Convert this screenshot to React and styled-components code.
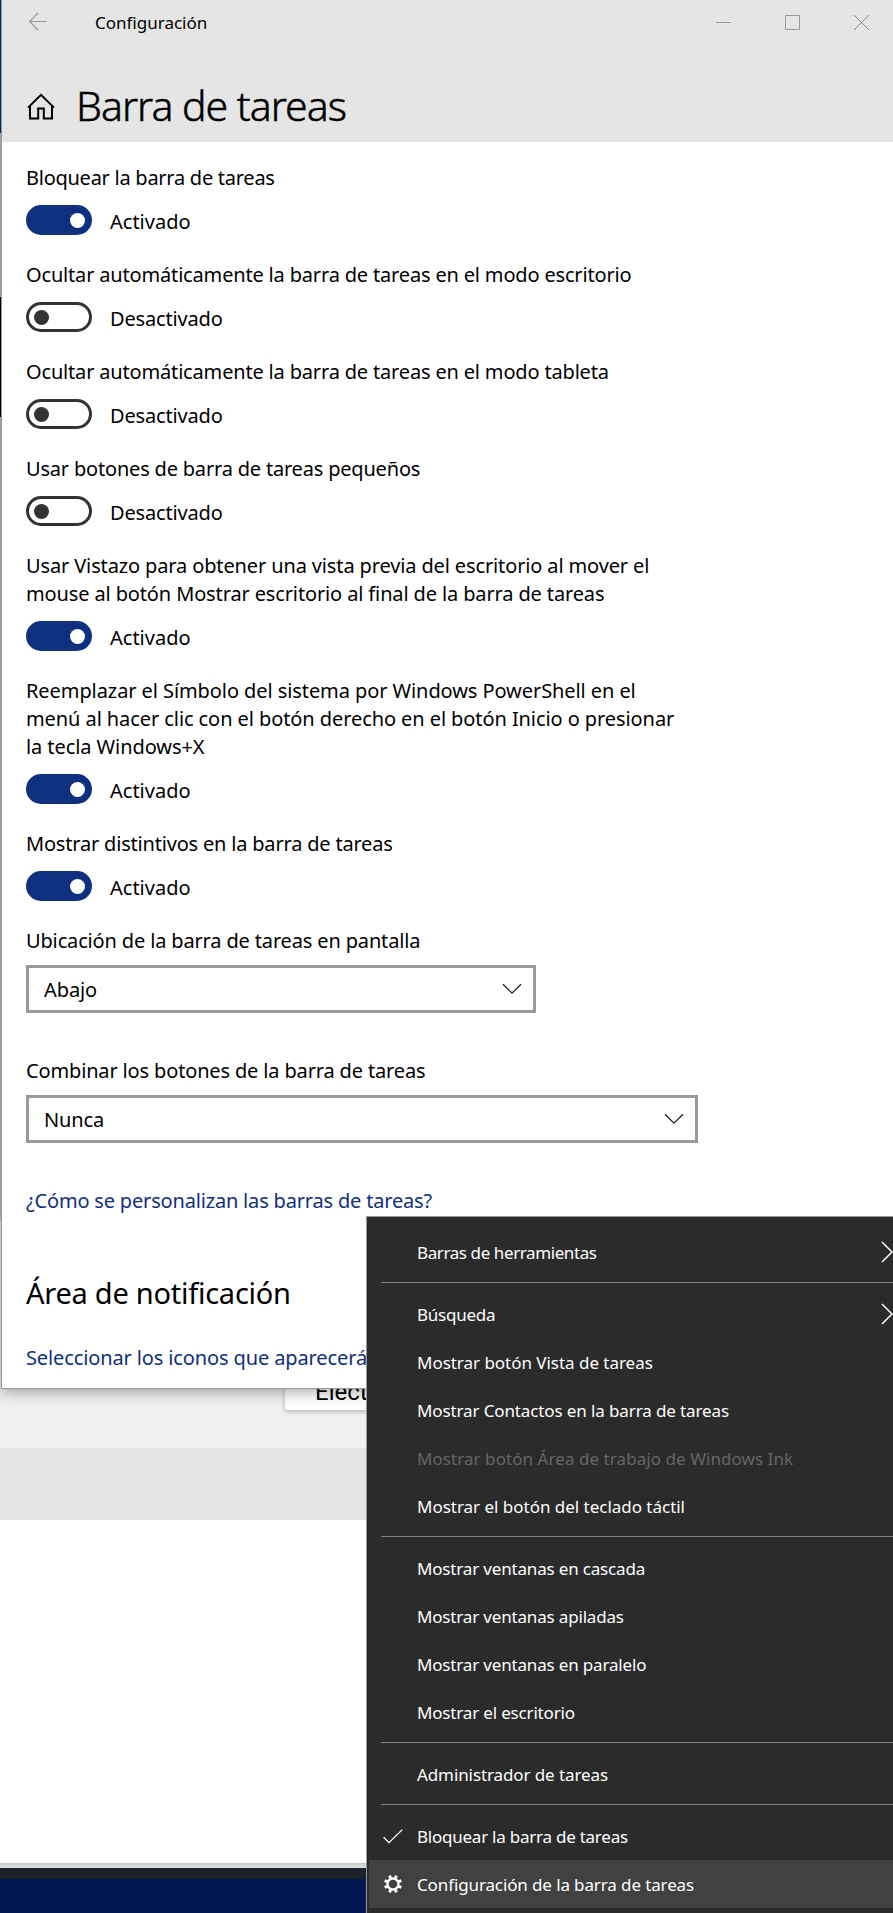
import React, { useState } from 'react';
import styled, { createGlobalStyle } from 'styled-components';

const initialToggles = [
  { id: 'lock', label: 'Bloquear la barra de tareas', on: true, tracking: -0.26 },
  {
    id: 'hide-desktop',
    label: 'Ocultar automáticamente la barra de tareas en el modo escritorio',
    on: false,
    tracking: -0.17,
  },
  {
    id: 'hide-tablet',
    label: 'Ocultar automáticamente la barra de tareas en el modo tableta',
    on: false,
    tracking: -0.17,
  },
  { id: 'small', label: 'Usar botones de barra de tareas pequeños', on: false, tracking: -0.19 },
  {
    id: 'peek',
    label:
      'Usar Vistazo para obtener una vista previa del escritorio al mover el mouse al botón Mostrar escritorio al final de la barra de tareas',
    on: true,
    tracking: -0.13,
  },
  {
    id: 'powershell',
    label:
      'Reemplazar el Símbolo del sistema por Windows PowerShell en el menú al hacer clic con el botón derecho en el botón Inicio o presionar la tecla Windows+X',
    on: true,
    tracking: -0.08,
  },
  { id: 'badges', label: 'Mostrar distintivos en la barra de tareas', on: true, tracking: -0.19 },
];

const menuGroups = [
  [{ label: 'Barras de herramientas', submenu: true, tracking: -0.4 }],
  [
    { label: 'Búsqueda', submenu: true, tracking: -0.25 },
    { label: 'Mostrar botón Vista de tareas', tracking: -0.03 },
    { label: 'Mostrar Contactos en la barra de tareas' },
    { label: 'Mostrar botón Área de trabajo de Windows Ink', disabled: true, tracking: 0.06 },
    { label: 'Mostrar el botón del teclado táctil', tracking: -0.02 },
  ],
  [
    { label: 'Mostrar ventanas en cascada', tracking: -0.17 },
    { label: 'Mostrar ventanas apiladas', tracking: -0.17 },
    { label: 'Mostrar ventanas en paralelo', tracking: -0.17 },
    { label: 'Mostrar el escritorio', tracking: -0.17 },
  ],
  [{ label: 'Administrador de tareas', tracking: -0.1 }],
  [
    { label: 'Bloquear la barra de tareas', icon: 'check', tracking: -0.24 },
    { label: 'Configuración de la barra de tareas', icon: 'gear', active: true },
  ],
];

const BackIcon = () => (
  <svg width="20" height="19" viewBox="0 0 20 19" fill="none" stroke="#999" strokeWidth="1.2">
    <path d="M19 9.5H1.5M10 1 1.5 9.5 10 18" />
  </svg>
);

const HomeIcon = () => (
  <svg width="28" height="27" viewBox="0 0 28 27" fill="none" stroke="#000" strokeWidth="2">
    <path d="M1 14.6 14 1.8l13 12.8M3 12.8V25.4h8.2v-10h5.6v10H25V12.8" />
  </svg>
);

const ChevronDown = () => (
  <svg width="20" height="12" viewBox="0 0 20 12" fill="none" stroke="#222" strokeWidth="1.3">
    <path d="M1 1.2 10 10.2 19 1.2" />
  </svg>
);

const ChevronRight = () => (
  <svg width="12" height="22" viewBox="0 0 12 22" fill="none" stroke="#fff" strokeWidth="1.5">
    <path d="M1 1 11 11 1 21" />
  </svg>
);

const CheckIcon = () => (
  <svg width="20" height="15" viewBox="0 0 20 15" fill="none" stroke="#fff" strokeWidth="1.3">
    <path d="M0.6 8.2 6 13.6 19.3 0.6" />
  </svg>
);

const GearIcon = () => (
  <svg width="18" height="18" viewBox="-9 -9 18 18" fill="none" stroke="#fff">
    <circle r="5.5" strokeWidth="2.3" />
    {[22.5, 67.5, 112.5, 157.5, 202.5, 247.5, 292.5, 337.5].map((a) => (
      <path key={a} d="M0 -6V-9" strokeWidth="3" transform={`rotate(${a})`} />
    ))}
  </svg>
);

const menuIcons = { check: <CheckIcon />, gear: <GearIcon /> };

const App = () => {
  const [toggles, setToggles] = useState(initialToggles);

  const flip = (id) => {
    setToggles(toggles.map((t) => (t.id === id ? { ...t, on: !t.on } : t)));
  };

  return (
    <Screen>
      <GlobalStyle />

      <Backdrop>
        <EdgeNavy />
        <EdgeGray $height={164} />
        <EdgeBlack />
        <EdgeGray $height={804} />
        <PageBand>
          <Card>Elect</Card>
        </PageBand>
        <FooterBand />
        <BlankBand />
        <BrowserEdge />
        <Wallpaper />
        <Taskbar />
      </Backdrop>

      <Window>
        <Header>
          <TitleBar>
            <BackButton>
              <BackIcon />
            </BackButton>
            <WindowTitle>Configuración</WindowTitle>
            <WindowButton aria-label="Minimizar">
              <svg width="15" height="15" stroke="#999">
                <path d="M0 7.5H15" />
              </svg>
            </WindowButton>
            <WindowButton aria-label="Maximizar">
              <svg width="15" height="15" stroke="#999" fill="none">
                <path d="M.5 .5h14v14H.5z" />
              </svg>
            </WindowButton>
            <WindowButton aria-label="Cerrar">
              <svg width="15" height="15" stroke="#888">
                <path d="M0 0 15 15M15 0 0 15" />
              </svg>
            </WindowButton>
          </TitleBar>
          <HeadingRow>
            <HomeIcon />
            <Heading>Barra de tareas</Heading>
          </HeadingRow>
        </Header>

        <Content>
          {toggles.map((t) => (
            <Setting key={t.id}>
              <Label $tracking={t.tracking}>{t.label}</Label>
              <ToggleRow>
                <Switch $on={t.on} role="switch" aria-checked={t.on} onClick={() => flip(t.id)}>
                  <Knob $on={t.on} />
                </Switch>
                <State $on={t.on}>{t.on ? 'Activado' : 'Desactivado'}</State>
              </ToggleRow>
            </Setting>
          ))}

          <Field>
            <Label $tracking={-0.15}>Ubicación de la barra de tareas en pantalla</Label>
            <Select $width={510}>
              Abajo
              <ChevronDown />
            </Select>
          </Field>
          <Field>
            <Label $tracking={-0.15}>Combinar los botones de la barra de tareas</Label>
            <Select $width={672}>
              Nunca
              <ChevronDown />
            </Select>
          </Field>

          <Link $tracking={-0.18}>¿Cómo se personalizan las barras de tareas?</Link>
          <SectionTitle>Área de notificación</SectionTitle>
          <Link $tracking={-0.12}>Seleccionar los iconos que aparecerán</Link>
        </Content>
      </Window>

      <ContextMenu>
        {menuGroups.map((group, i) => (
          <MenuGroup key={i}>
            {group.map((item) => (
              <MenuItem
                key={item.label}
                $active={item.active}
                $disabled={item.disabled}
                $tracking={item.tracking}
              >
                <IconSlot>{menuIcons[item.icon]}</IconSlot>
                <MenuText>{item.label}</MenuText>
                {item.submenu && <ChevronRight />}
              </MenuItem>
            ))}
          </MenuGroup>
        ))}
      </ContextMenu>
    </Screen>
  );
};

// Styled Components
const GlobalStyle = createGlobalStyle`
  body {
    margin: 0;
    background: #fff;
  }

  * {
    box-sizing: border-box;
  }
`;

const Screen = styled.div`
  position: relative;
  width: 893px;
  height: 1913px;
  overflow: hidden;
  font-family: 'Noto Sans', 'Open Sans', sans-serif;
  font-size: 20px;
  color: #000;
`;

const Backdrop = styled.div`
  display: flex;
  flex-direction: column;
  height: 100%;
`;

const EdgeNavy = styled.div`
  height: 133px;
  background: #003672;
`;

const EdgeGray = styled.div`
  height: ${({ $height }) => $height}px;
  background: #c4c4c4;
`;

const EdgeBlack = styled.div`
  height: 120px;
  background: #000;
`;

const PageBand = styled.div`
  height: 227px;
  padding: 147px 0 0 285px;
  background: #f1f1f1;
`;

const Card = styled.div`
  width: 300px;
  height: 42px;
  padding-left: 30px;
  border-radius: 3px;
  background: #fff;
  box-shadow: 0 2px 5px rgba(0, 0, 0, 0.25);
  font-family: Roboto, sans-serif;
  font-size: 24px;
  line-height: 48px;
`;

const FooterBand = styled.div`
  height: 72px;
  background: #e4e4e4;
`;

const BlankBand = styled.div`
  height: 343px;
  background: #fff;
`;

const BrowserEdge = styled.div`
  height: 5px;
  background: linear-gradient(#c8cac9, #dfe1e0);
`;

const Wallpaper = styled.div`
  height: 11px;
  background: #1c2128;
`;

const Taskbar = styled.div`
  flex: 1;
  background: #031850;
`;

const Window = styled.div`
  position: absolute;
  top: 0;
  left: 1px;
  width: 900px;
  height: 1389px;
  border: solid #999;
  border-width: 0 0 1px 1px;
  background: #fff;
  box-shadow: 0 3px 14px rgba(0, 0, 0, 0.35);
`;

const Header = styled.div`
  height: 142px;
  background: #e5e5e5;
`;

const TitleBar = styled.div`
  display: flex;
  align-items: center;
  width: 894px;
  height: 45px;
`;

const BackButton = styled.div`
  display: flex;
  width: 93px;
  padding: 0 0 2px 26px;
`;

const WindowTitle = styled.div`
  flex: 1;
  font-size: 17px;
`;

const WindowButton = styled.button`
  display: flex;
  justify-content: center;
  width: 69px;
  padding: 0;
  border: none;
  background: none;
`;

const HeadingRow = styled.div`
  display: flex;
  align-items: center;
  gap: 21px;
  height: 97px;
  padding: 26px 0 0 25px;
`;

const Heading = styled.h1`
  margin: 0;
  padding-bottom: 4px;
  font-size: 41px;
  font-weight: 300;
  line-height: 50px;
  letter-spacing: -1px;
  -webkit-text-stroke: 0.5px #000;
`;

const Content = styled.div`
  padding: 22px 0 0 24px;
`;

const Setting = styled.div`
  margin-bottom: 26px;
`;

const Label = styled.div`
  max-width: 658px;
  margin-bottom: 13px;
  line-height: 28px;
  letter-spacing: ${({ $tracking = -0.17 }) => $tracking}px;
`;

const ToggleRow = styled.div`
  display: flex;
  align-items: center;
  gap: 18px;
  height: 30px;
`;

const Switch = styled.button`
  display: flex;
  align-items: center;
  justify-content: ${({ $on }) => ($on ? 'flex-end' : 'flex-start')};
  width: 66px;
  height: 30px;
  padding: 0 ${({ $on }) => ($on ? 4 : 5)}px;
  border: 3px solid ${({ $on }) => ($on ? '#0f2f7f' : '#333')};
  border-radius: 15px;
  background: ${({ $on }) => ($on ? '#0f2f7f' : '#fff')};
`;

const Knob = styled.span`
  width: 15px;
  height: 15px;
  border-radius: 50%;
  background: ${({ $on }) => ($on ? '#fff' : '#333')};
`;

const State = styled.span`
  padding-top: 4px;
  line-height: 28px;
  letter-spacing: ${({ $on }) => ($on ? 0 : -0.17)}px;
`;

const Field = styled.div`
  margin-bottom: 44px;

  ${Label} {
    margin-bottom: 10px;
  }
`;

const Select = styled.div`
  display: flex;
  align-items: center;
  justify-content: space-between;
  width: ${({ $width }) => $width}px;
  height: 48px;
  padding: 0 11px 0 15px;
  border: 3px solid #999;
  letter-spacing: -0.1px;
`;

const Link = styled.a`
  display: block;
  line-height: 28px;
  letter-spacing: ${({ $tracking }) => $tracking}px;
  white-space: nowrap;
  color: #0f2f7f;
`;

const SectionTitle = styled.h2`
  margin: 58px 0 31px;
  font-size: 29px;
  font-weight: 400;
  line-height: 40px;
  letter-spacing: -0.25px;
`;

const ContextMenu = styled.div`
  position: absolute;
  top: 1216px;
  left: 366px;
  width: 540px;
  height: 710px;
  padding: 11px 0 0 2px;
  border: solid #999;
  border-width: 1px 0 0 1px;
  background: #2b2b2b;
`;

const MenuGroup = styled.div`
  & + &::before {
    content: '';
    display: block;
    height: 1px;
    margin: 6px 0 7px 12px;
    background: #808080;
  }
`;

const MenuItem = styled.div`
  display: flex;
  align-items: center;
  width: 524px;
  height: 48px;
  font-size: 17px;
  letter-spacing: ${({ $tracking = -0.12 }) => $tracking}px;
  color: ${({ $disabled }) => ($disabled ? '#666' : '#fff')};
  background: ${({ $active }) => ($active ? '#414141' : 'transparent')};
  box-shadow: ${({ $active }) => ($active ? '10px 0 #414141' : 'none')};
`;

const IconSlot = styled.span`
  display: flex;
  justify-content: center;
  width: 48px;
`;

const MenuText = styled.span`
  flex: 1;
`;

export default App;
